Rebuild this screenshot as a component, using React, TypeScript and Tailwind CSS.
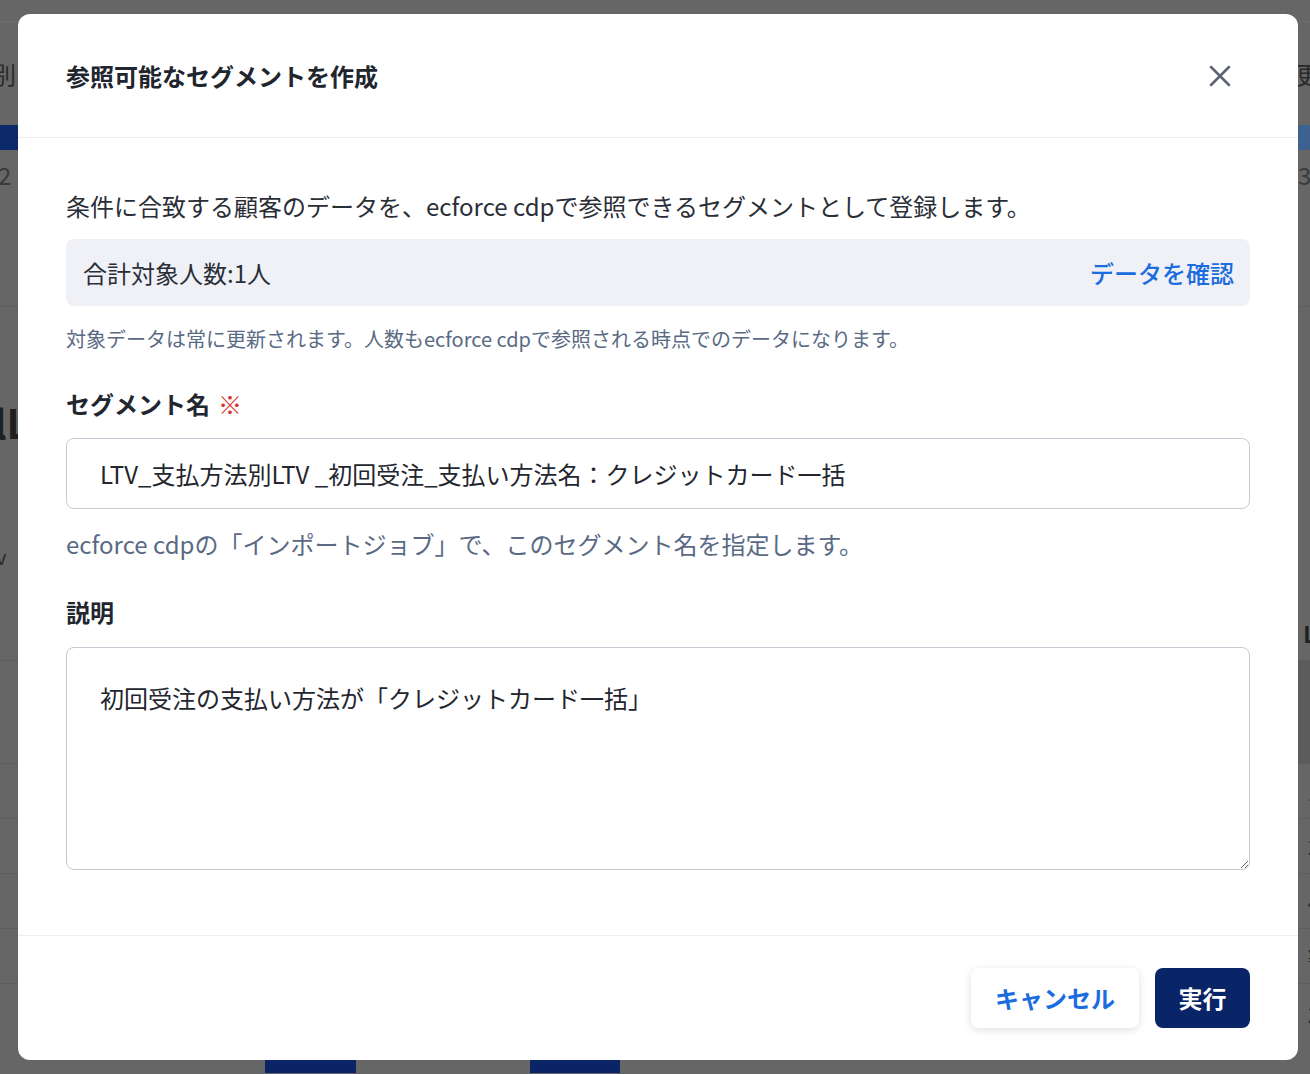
import { X } from "lucide-react";

const font = { fontFamily: '"Noto Sans CJK JP", "Noto Sans", sans-serif' };

// the page behind the dialog, already dimmed by the backdrop
const Backdrop = () => (
  <div className="flex h-[1074px] w-[1310px] flex-col overflow-hidden bg-[#666666] text-[#2a2a2a]">
    <div className="h-[22px] border-b border-[#6e6e6e]" />
    <div className="flex h-[103px] items-center justify-between text-[24px]">
      <span className="-ml-[8px]">別</span>
      <span className="-mr-[10px]">更</span>
    </div>
    <div className="flex h-[25px] justify-between">
      <div className="w-[40px] bg-[#0c2a6a]" />
      <div className="w-[40px] bg-[#3d6290]" />
    </div>
    <div className="flex h-[50px] items-center justify-between text-[24px] text-[#3a3a3a]">
      <span className="-ml-[2px]">2</span>
      <span className="-mr-[8px]">3,</span>
    </div>
    <div className="h-[107px] border-b border-[#5f5f5f]" />
    <div className="flex h-[230px] items-center justify-between">
      <span className="-ml-[6px] text-[40px] font-bold text-[#1f1f1f]">lL</span>
    </div>
    <div className="flex h-[40px] items-center text-[20px]">
      <span className="-ml-[4px]">v</span>
    </div>
    <div className="flex h-[83px] items-end justify-end pb-[10px]">
      <span className="-mr-[6px] text-[22px] font-bold text-[#1f1f1f]">L</span>
    </div>
    <div className="flex h-[103px] justify-between border-t border-[#5f5f5f] text-[22px]">
      <span />
      <div className="flex w-[60px] flex-col bg-[#5c5c5c] pl-[6px]">
        <span className="flex h-[55px] items-center">20</span>
        <span className="flex h-[48px] items-center">48</span>
      </div>
    </div>
    <div className="flex h-[55px] items-center justify-between border-t border-[#5f5f5f] text-[22px]">
      <span />
      <span className="-mr-[10px]">1</span>
    </div>
    <div className="flex h-[55px] items-center justify-between border-t border-[#5f5f5f] text-[22px]">
      <span />
      <span className="-mr-[10px]">3</span>
    </div>
    <div className="flex h-[55px] items-center justify-between border-t border-[#5f5f5f] text-[22px]">
      <span />
      <span className="-mr-[10px]">4</span>
    </div>
    <div className="flex h-[55px] items-center justify-between border-t border-[#5f5f5f] text-[22px]">
      <span />
      <span className="-mr-[10px]">¥</span>
    </div>
    <div className="flex h-[60px] items-center justify-between border-t border-[#5f5f5f] text-[22px] font-bold">
      <span />
      <span className="-mr-[10px]">1</span>
    </div>
    <div className="flex h-[30px] items-end gap-[174px] pl-[265px]">
      <div className="h-[14px] w-[91px] bg-[#0b2466]" />
      <div className="h-[14px] w-[90px] bg-[#0b2466]" />
    </div>
  </div>
);

const Label = ({ children, required }: { children: string; required?: boolean }) => (
  <div className="flex items-center gap-2 text-[24px] font-bold leading-[30px] text-[#22262f]">
    <span>{children}</span>
    {required && <span className="font-normal text-[#d5322b]">※</span>}
  </div>
);

const Dialog = () => (
  <div className="absolute left-[18px] top-[14px] flex h-[1046px] w-[1280px] flex-col rounded-[12px] bg-white">
    <div className="flex h-[124px] shrink-0 items-center justify-between border-b border-[#eceef1] pl-12 pr-[60px]">
      <h2 className="text-[24px] font-bold text-[#21252e]">参照可能なセグメントを作成</h2>
      <X className="h-[36px] w-[36px] text-[#5b6275]" strokeWidth={1.7} />
    </div>

    <div className="flex flex-1 flex-col px-12 pt-[53px]">
      <p className="text-[24px] leading-[30px] text-[#2a2e37]">
        条件に合致する顧客のデータを、ecforce cdpで参照できるセグメントとして登録します。
      </p>

      <div className="mt-[18px] flex h-[67px] items-center justify-between rounded-[8px] bg-[#eff1f6] pl-[17px] pr-[16px]">
        <span className="text-[24px] text-[#2a2e37]">合計対象人数:1人</span>
        <span className="text-[24px] font-medium text-[#1a6cdf]">データを確認</span>
      </div>

      <p className="mt-[19px] text-[20px] leading-[28px] text-[#5a6a84]">
        対象データは常に更新されます。人数もecforce cdpで参照される時点でのデータになります。
      </p>

      <div className="mt-[36px]">
        <Label required>セグメント名</Label>
      </div>
      <input
        className="mt-[19px] h-[71px] w-full rounded-[8px] border border-[#c8cad6] bg-white px-[33px] text-[24px] text-[#23262e] outline-none"
        style={font}
        defaultValue="LTV_支払方法別LTV _初回受注_支払い方法名：クレジットカード一括"
      />
      <p className="mt-[20px] text-[24px] leading-[30px] text-[#5a6a84]">
        ecforce cdpの「インポートジョブ」で、このセグメント名を指定します。
      </p>

      <div className="mt-[38px]">
        <Label>説明</Label>
      </div>
      <textarea
        className="mt-[20px] h-[223px] w-full rounded-[8px] border border-[#c6c8d4] bg-white px-[33px] pt-[34px] text-[24px] leading-[32px] text-[#23262e] outline-none"
        style={font}
        defaultValue="初回受注の支払い方法が「クレジットカード一括」"
      />
    </div>

    <div className="flex h-[125px] shrink-0 items-center justify-end gap-4 border-t border-[#eceef1] px-12">
      <button className="h-[60px] w-[168px] rounded-[8px] bg-white text-[24px] font-bold text-[#1a6cdf] shadow-[0_2px_8px_rgba(0,0,0,0.13)]">
        キャンセル
      </button>
      <button className="h-[60px] w-[95px] rounded-[8px] bg-[#0a2468] text-[24px] font-bold text-white">
        実行
      </button>
    </div>
  </div>
);

export default function App() {
  return (
    <div className="relative h-[1074px] w-[1310px] overflow-hidden" style={font}>
      <Backdrop />
      <Dialog />
    </div>
  );
}
